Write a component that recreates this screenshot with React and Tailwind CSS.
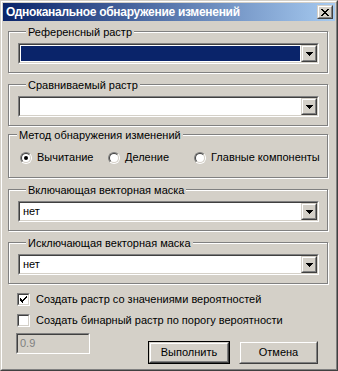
import React from "react";

function Raised({ className = "", children }) {
  return (
    <div className={`border border-t-[#d4d0c8] border-l-[#d4d0c8] border-r-[#404040] border-b-[#404040] ${className}`}>
      <div className="w-full h-full border border-t-white border-l-white border-r-[#808080] border-b-[#808080] bg-[#d4d0c8] flex items-center justify-center">
        {children}
      </div>
    </div>
  );
}

function Sunken({ className = "", innerClass = "", children }) {
  return (
    <div className={`border border-t-[#808080] border-l-[#808080] border-r-white border-b-white ${className}`}>
      <div className={`w-full h-full border border-t-[#404040] border-l-[#404040] border-r-[#d4d0c8] border-b-[#d4d0c8] ${innerClass}`}>
        {children}
      </div>
    </div>
  );
}

function Arrow() {
  return (
    <svg width="7" height="4" viewBox="0 0 7 4" className="block">
      <path d="M0 0h7v1H0zM1 1h5v1H1zM2 2h3v1H2zM3 3h1v1H3z" fill="#000" />
    </svg>
  );
}

function Combo({ text = "", selected = false, className = "" }) {
  return (
    <Sunken className={`h-[21px] ${className}`} innerClass="bg-white flex">
      <div className="flex-1 flex p-px">
        <div className={`flex-1 flex items-center pl-[2px] ${selected ? "bg-[#0a246a] text-white" : "text-black"}`}>
          {text}
        </div>
      </div>
      <Raised className="w-[16px] h-full">
        <Arrow />
      </Raised>
    </Sunken>
  );
}

function Group({ label, className = "", children }) {
  return (
    <div className={`border border-[#808080] shadow-[inset_1px_1px_0_#fff,1px_1px_0_#fff] ${className}`}>
      <div className="-mt-[6px] ml-[8px] w-fit bg-[#d4d0c8] px-[2px] leading-[13px]">{label}</div>
      {children}
    </div>
  );
}

function Radio({ checked }) {
  return (
    <div className="w-[12px] h-[12px] rounded-full border border-t-[#808080] border-l-[#808080] border-r-white border-b-white shrink-0">
      <div className="w-full h-full rounded-full border border-t-[#404040] border-l-[#404040] border-r-[#d4d0c8] border-b-[#d4d0c8] bg-white flex items-center justify-center">
        {checked && <div className="w-[4px] h-[4px] rounded-full bg-black" />}
      </div>
    </div>
  );
}

function Check({ checked }) {
  return (
    <Sunken className="w-[13px] h-[13px] shrink-0" innerClass="bg-white flex items-center justify-center">
      {checked && (
        <svg width="7" height="7" viewBox="0 0 7 7" className="block">
          <path d="M6 0h1v1H6zM5 1h2v1H5zM0 2h1v1H0zM4 2h2v1H4zM0 3h2v1H0zM3 3h2v1H3zM0 4h4v1H0zM1 5h2v1H1zM2 6h1v1H2z" fill="#000" />
        </svg>
      )}
    </Sunken>
  );
}

export default function App() {
  return (
    <div className="w-[338px] h-[371px] bg-[#d4d0c8] font-['Liberation_Sans',Arial,sans-serif] text-[11px] leading-[13px] text-black border border-t-[#d4d0c8] border-l-[#d4d0c8] border-r-[#404040] border-b-[#404040]">
      <div className="h-full border border-t-white border-l-white border-r-[#808080] border-b-[#808080] p-px flex flex-col">
        <div className="h-[18px] shrink-0 flex items-center bg-[linear-gradient(90deg,#0a246a,#a6caf0)] pl-[3px] pr-[2px]">
          <span className="text-white font-bold text-[12px] leading-[14px] tracking-[-0.3px]">Одноканальное обнаружение изменений</span>
          <Raised className="ml-auto w-[16px] h-[14px]">
            <svg width="8" height="7" viewBox="0 0 8 7" className="block">
              <path d="M0 0h2v1H0zM6 0h2v1H6zM1 1h2v1H1zM5 1h2v1H5zM2 2h4v1H2zM3 3h2v1H3zM2 4h4v1H2zM1 5h2v1H1zM5 5h2v1H5zM0 6h2v1H0zM6 6h2v1H6z" fill="#000" />
            </svg>
          </Raised>
        </div>

        <div className="flex-1 flex flex-col pl-[5px] pr-[7px]">
          <Group label="Референсный растр" className="mt-[10px] pl-[9px] pr-[8px] pb-[8px]">
            <Combo selected className="mt-[4px]" />
          </Group>

          <Group label="Сравниваемый растр" className="mt-[11px] pl-[9px] pr-[8px] pb-[8px]">
            <Combo className="mt-[4px]" />
          </Group>

          <Group label="Метод обнаружения изменений" className="mt-[8px] pb-[13px]">
            <div className="mt-[9px] flex items-center">
              <div className="ml-[11px] w-[88px] flex items-center gap-[5px]">
                <Radio checked />
                <span>Вычитание</span>
              </div>
              <div className="w-[86px] flex items-center gap-[5px]">
                <Radio />
                <span>Деление</span>
              </div>
              <div className="flex items-center gap-[5px]">
                <Radio />
                <span>Главные компоненты</span>
              </div>
            </div>
          </Group>

          <Group label="Включающая векторная маска" className="mt-[11px] pl-[9px] pr-[8px] pb-[8px]">
            <Combo text="нет" className="mt-[4px]" />
          </Group>

          <Group label="Исключающая векторная маска" className="mt-[11px] pl-[9px] pr-[8px] pb-[8px]">
            <Combo text="нет" className="mt-[4px]" />
          </Group>

          <div className="mt-[9px] ml-[9px] flex items-center gap-[6px]">
            <Check checked />
            <span>Создать растр со значениями вероятностей</span>
          </div>
          <div className="mt-[8px] ml-[9px] flex items-center gap-[6px]">
            <Check />
            <span>Создать бинарный растр по порогу вероятности</span>
          </div>

          <div className="mt-[6px] flex items-start">
            <Sunken className="ml-[8px] w-[74px] h-[21px]" innerClass="bg-[#d4d0c8] flex items-center pl-[2px] text-[#808080]">
              0.9
            </Sunken>
            <div className="ml-auto mr-[10px] mt-[8px] flex gap-[9px]">
              <div className="w-[82px] h-[23px] border border-black">
                <Raised className="w-full h-full">Выполнить</Raised>
              </div>
              <Raised className="w-[79px] h-[23px]">Отмена</Raised>
            </div>
          </div>
        </div>
      </div>
    </div>
  );
}
